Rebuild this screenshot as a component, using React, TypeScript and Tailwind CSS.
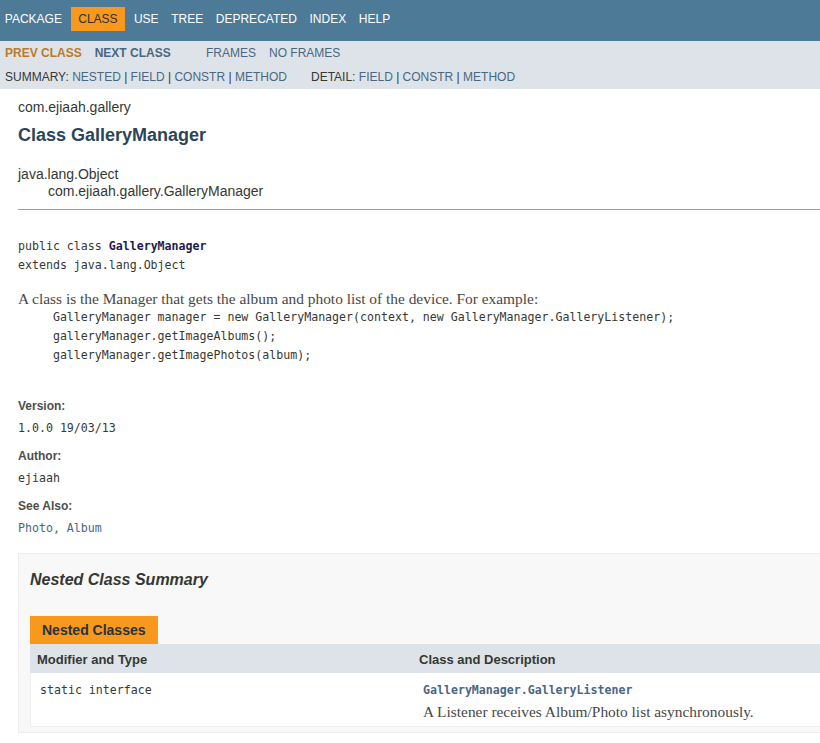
const SANS = "font-['Liberation_Sans',Arial,sans-serif]";
const MONO = "font-['DejaVu_Sans_Mono',monospace]";
const SERIF = "font-['Liberation_Serif',Georgia,serif]";

const NAV = ["Package", "Class", "Use", "Tree", "Deprecated", "Index", "Help"];

function Sep() {
  return <span className="text-[#353833]"> | </span>;
}

export default function App() {
  return (
    <div className={`${SANS} min-h-screen w-full overflow-hidden bg-white text-[#353833]`}>
      {/* top nav */}
      <div className="h-[41px] bg-[#4d7a97] pt-[7px]">
        <ul className="ml-[-1.5px] flex text-[12px] uppercase text-white">
          {NAV.map((n) => (
            <li
              key={n}
              className={
                n === "Class"
                  ? "mx-[3px] bg-[#f8981d] px-[7px] py-[4px] leading-[16px] text-[#253441]"
                  : "px-[6.3px] py-[4px] leading-[16px]"
              }
            >
              {n}
            </li>
          ))}
        </ul>
      </div>

      {/* sub nav */}
      <div className="bg-[#dee3e9] pb-[4px] pl-[5px] pt-[4px] text-[12px] uppercase">
        <div className="flex leading-[16px]">
          <div className="flex w-[201px] font-bold">
            <span className="text-[#bb7a2a]">Prev Class</span>
            <span className="ml-[13px] text-[#4a6782]">Next Class</span>
          </div>
          <span className="text-[#4a6782]">Frames</span>
          <span className="ml-[13px] text-[#4a6782]">No Frames</span>
        </div>
        <div className="mt-[8px] flex whitespace-pre leading-[16px]">
          <div className="w-[306px]">
            Summary: <span className="text-[#4a6782]">Nested</span>
            <Sep />
            <span className="text-[#4a6782]">Field</span>
            <Sep />
            <span className="text-[#4a6782]">Constr</span>
            <Sep />
            <span className="text-[#4a6782]">Method</span>
          </div>
          <div>
            Detail: <span className="text-[#4a6782]">Field</span>
            <Sep />
            <span className="text-[#4a6782]">Constr</span>
            <Sep />
            <span className="text-[#4a6782]">Method</span>
          </div>
        </div>
      </div>

      {/* content */}
      <div className="w-[900px] pl-[18px]">
        <div className="mt-[10px] text-[14px] leading-[16px]">com.ejiaah.gallery</div>
        <h2 className="mt-[9px] text-[18px] font-bold leading-[22px] text-[#2c4557]">
          Class GalleryManager
        </h2>

        <div className="mt-[20px] text-[14px] leading-[17px]">
          <div>java.lang.Object</div>
          <div className="pl-[30px]">com.ejiaah.gallery.GalleryManager</div>
        </div>

        <hr className="mt-[9px] border-0 border-t border-[#9e9e9e]" />

        <pre className={`${MONO} mt-[27px] text-[11.6px] leading-[19px]`}>
          public class <b className="text-[#1f1c4d]">GalleryManager</b>
          {"\n"}extends java.lang.Object
        </pre>

        <div className={`${SERIF} mt-[14px] text-[15.4px] leading-[19px] text-[#474747]`}>
          A class is the Manager that gets the album and photo list of the device. For example:
        </div>
        <pre className={`${MONO} text-[11.6px] leading-[19px] text-[#353833]`}>
          {"     GalleryManager manager = new GalleryManager(context, new GalleryManager.GalleryListener);\n"}
          {"     galleryManager.getImageAlbums();\n"}
          {"     galleryManager.getImagePhotos(album);"}
        </pre>

        <dl className="mt-[33px]">
          <dt className="text-[12px] font-bold leading-[16px] text-[#4e4e4e]">Version:</dt>
          <dd className={`${MONO} mt-[5px] text-[11.6px] leading-[19px]`}>1.0.0 19/03/13</dd>
          <dt className="mt-[10px] text-[12px] font-bold leading-[16px] text-[#4e4e4e]">Author:</dt>
          <dd className={`${MONO} mt-[5px] text-[11.6px] leading-[19px]`}>ejiaah</dd>
          <dt className="mt-[10px] text-[12px] font-bold leading-[16px] text-[#4e4e4e]">See Also:</dt>
          <dd className={`${MONO} mt-[5px] text-[11.6px] leading-[19px] text-[#4a6782]`}>
            Photo, Album
          </dd>
        </dl>

        {/* nested class summary */}
        <div className="mt-[15px] border border-[#ededed] bg-[#f8f8f8] pb-[5px] pl-[11px] pt-[16px]">
          <h3 className="text-[16px] font-bold italic leading-[20px]">Nested Class Summary</h3>
          <div className="mt-[26px] inline-block bg-[#f8981d] px-[12px] text-[14px] font-bold leading-[28px] text-[#253441]">
            Nested Classes
          </div>
          <div className="grid grid-cols-[382px_1fr] bg-[#dee3e9] pb-[1px] pt-[4px] text-[13px] font-bold leading-[24px]">
            <div className="pl-[7px]">Modifier and Type</div>
            <div className="pl-[7px]">Class and Description</div>
          </div>
          <div className="grid grid-cols-[382px_1fr] border-b border-l border-[#eeeeee] bg-white pb-[4px] pt-[8px]">
            <div className={`${MONO} pl-[9px] text-[11.6px] leading-[19px]`}>static interface</div>
            <div className="pl-[10px]">
              <div className={`${MONO} text-[11.6px] font-bold leading-[19px] text-[#4a6782]`}>
                GalleryManager.GalleryListener
              </div>
              <div className={`${SERIF} mt-[2px] text-[15.4px] leading-[20px] text-[#474747]`}>
                A Listener receives Album/Photo list asynchronously.
              </div>
            </div>
          </div>
        </div>
      </div>
    </div>
  );
}
